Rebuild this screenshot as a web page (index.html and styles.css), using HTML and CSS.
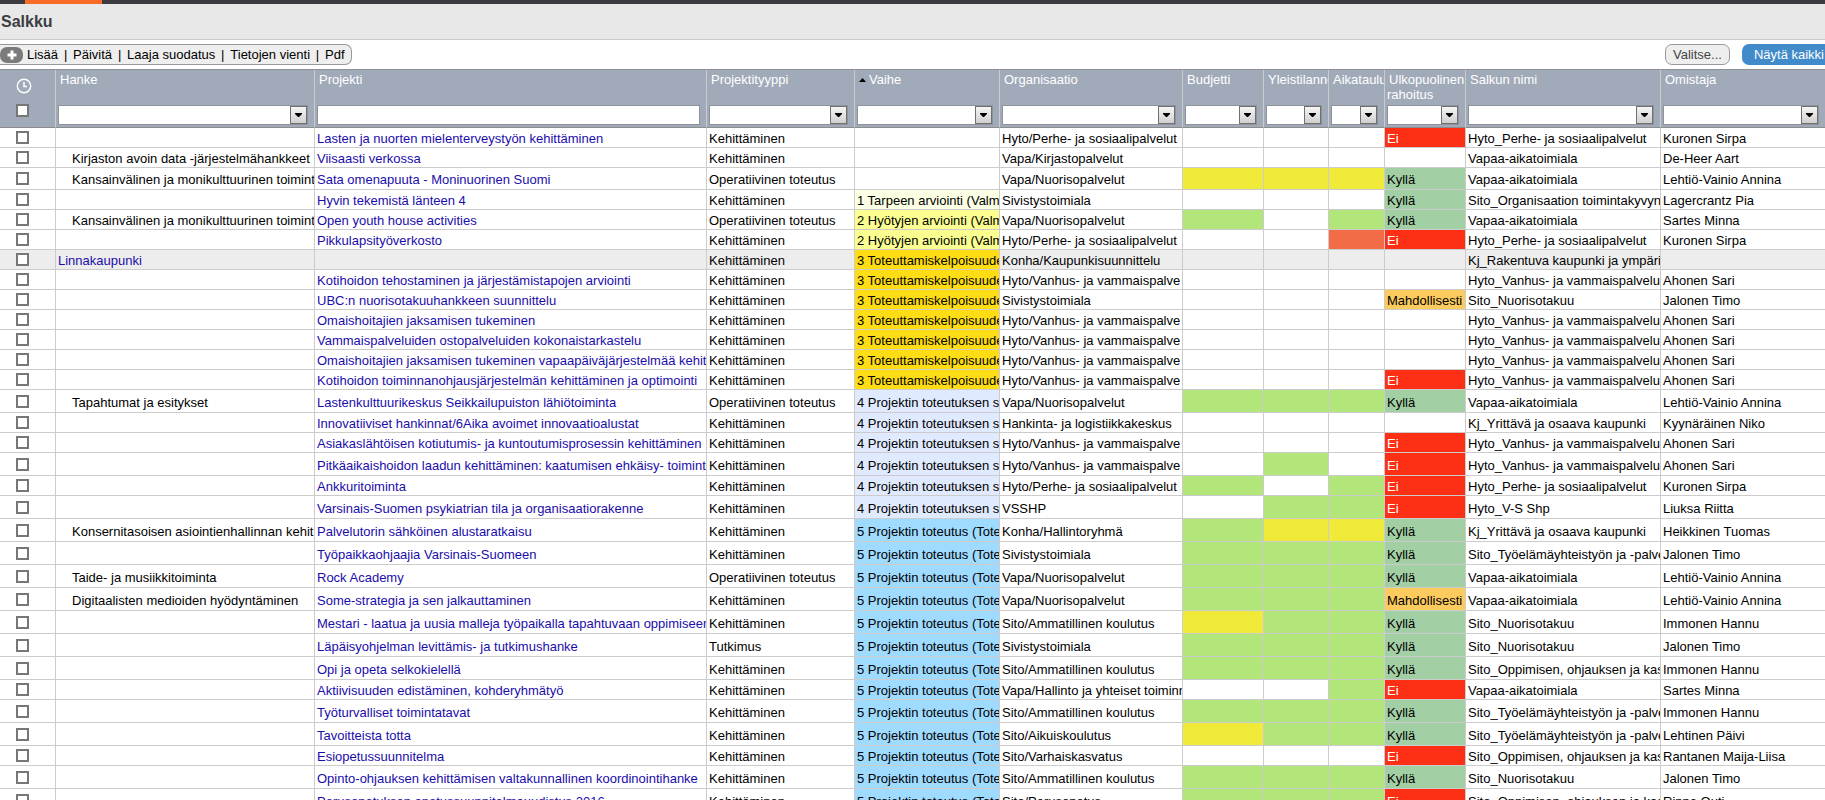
FILE: index.html
```html
<!DOCTYPE html>
<html lang="fi">
<head>
<meta charset="utf-8">
<title>Salkku</title>
<link rel="stylesheet" href="styles.css">
</head>
<body class="page">
<nav class="topbar"><span class="topbar-active"></span></nav>
<header class="titlebar"><h1 class="title">Salkku</h1></header>
<div class="toolbar">
  <div class="actions">
    <span class="plus"><svg width="10" height="10" viewBox="0 0 10 10" aria-hidden="true"><path d="M5 0.500v9M0.500 5h9" stroke="#fff" stroke-width="3"/></svg></span>
    <button class="action" type="button">Lisää</button><span class="bar">|</span>
    <button class="action" type="button">Päivitä</button><span class="bar">|</span>
    <button class="action" type="button">Laaja suodatus</button><span class="bar">|</span>
    <button class="action" type="button">Tietojen vienti</button><span class="bar">|</span>
    <button class="action" type="button">Pdf</button>
  </div>
  <div class="views">
    <button class="choose" type="button">Valitse...</button>
    <button class="show-all" type="button">Näytä kaikki</button>
  </div>
</div>
<main class="grid-area">
<table class="grid">
  <colgroup>
    <col class="c-check"><col class="c-hanke"><col class="c-projekti"><col class="c-tyyppi"><col class="c-vaihe"><col class="c-org"><col class="c-medium"><col class="c-yleis"><col class="c-aika"><col class="c-medium"><col class="c-salkku"><col>
  </colgroup>
  <thead>
    <tr>
      <th><div class="head head-check">
        <svg width="16" height="16" viewBox="0 0 16 16" aria-hidden="true"><circle cx="8" cy="8" r="6.7" fill="none" stroke="#fff" stroke-width="1.4"/><path d="M8 4v4.6h3" fill="none" stroke="#fff" stroke-width="1.5"/></svg>
        <input class="check" type="checkbox" aria-label="Valitse kaikki">
      </div></th>
      <th><div class="head"><label class="name" for="f1">Hanke</label><select class="filter" id="f1"><option></option></select></div></th>
      <th><div class="head"><label class="name" for="f2">Projekti</label><input class="filter filter-text" id="f2" type="text"></div></th>
      <th><div class="head"><label class="name" for="f3">Projektityyppi</label><select class="filter" id="f3"><option></option></select></div></th>
      <th><div class="head"><label class="name" for="f4"><svg class="sort" width="7" height="4" viewBox="0 0 7 4" aria-hidden="true"><path d="M0 4L3.500 0L7 4z"/></svg>Vaihe</label><select class="filter" id="f4"><option></option></select></div></th>
      <th><div class="head"><label class="name" for="f5">Organisaatio</label><select class="filter" id="f5"><option></option></select></div></th>
      <th><div class="head"><label class="name" for="f6">Budjetti</label><select class="filter" id="f6"><option></option></select></div></th>
      <th><div class="head"><label class="name" for="f7">Yleistilanne</label><select class="filter" id="f7"><option></option></select></div></th>
      <th><div class="head"><label class="name" for="f8">Aikataulu</label><select class="filter" id="f8"><option></option></select></div></th>
      <th><div class="head"><label class="name" for="f9">Ulkopuolinen<br>rahoitus</label><select class="filter" id="f9"><option></option></select></div></th>
      <th><div class="head"><label class="name" for="f10">Salkun nimi</label><select class="filter" id="f10"><option></option></select></div></th>
      <th><div class="head"><label class="name" for="f11">Omistaja</label><select class="filter" id="f11"><option></option></select></div></th>
    </tr>
  </thead>
  <tbody id="rows"></tbody>
</table>
</main>
<script src="app.js"></script>
</body>
</html>
```
FILE: styles.css
```css
.page {
  margin: 0;
  height: 100vh;
  display: flex;
  flex-direction: column;
  overflow: hidden;
  background: #fff;
  color: #000;
  font: 13px/15px "Liberation Sans", Arial, sans-serif;
}
.topbar {
  flex: none;
  height: 4px;
  padding-left: 25px;
  background: #3c3b41;
}
.topbar-active {
  display: block;
  width: 77px;
  height: 4px;
  background: #f96a26;
}
.titlebar {
  flex: none;
  padding: 9px 1px 8px;
  background: #e8e8e8;
  border-bottom: 1px solid #ccc;
}
.title {
  margin: 0;
  font-size: 16px;
  line-height: 18px;
  color: #3c3d42;
}
.toolbar {
  flex: none;
  display: flex;
  justify-content: space-between;
  padding: 4px 0;
}
.actions {
  display: flex;
  align-items: center;
  height: 19px;
  padding-right: 6px;
  background: #eee;
  border: 1px solid #999;
  border-left: 0;
  border-radius: 0 7px 7px 0;
}
.plus {
  display: flex;
  align-items: center;
  justify-content: center;
  width: 23px;
  height: 16px;
  margin-right: 4px;
  background: #7b7b7b;
  border-radius: 7px;
}
.action {
  padding: 0;
  border: 0;
  background: none;
  color: #000;
  font: inherit;
}
.bar {
  width: 15px;
  text-align: center;
}
.views {
  display: flex;
  gap: 12px;
}
.choose,
.show-all {
  height: 21px;
  padding: 0 7px;
  border: 1px solid #999;
  border-radius: 7px;
  background: #eee;
  color: #444;
  font: inherit;
}
.show-all {
  padding: 0 1px 0 12px;
  border: 0;
  border-radius: 7px 0 0 7px;
  background: #428bca;
  color: #fff;
}
.grid-area {
  flex: 1;
  min-height: 0;
  overflow: hidden;
}
.grid {
  width: 100%;
  table-layout: fixed;
  border-collapse: separate;
  border-spacing: 0;
  border-top: 1px solid #8d9196;
}
.c-check { width: 56px; }
.c-hanke { width: 259px; }
.c-projekti { width: 392px; }
.c-tyyppi { width: 148px; }
.c-vaihe { width: 145px; }
.c-org { width: 183px; }
.c-medium { width: 81px; }
.c-yleis { width: 65px; }
.c-aika { width: 56px; }
.c-salkku { width: 195px; }

th {
  padding: 0;
  background: #a1aab9;
  border-right: 1px solid #ccc;
  border-bottom: 1px solid #8d8d8d;
  color: #fff;
  font-weight: normal;
  text-align: left;
}
th:last-child,
td:last-child { border-right: 0; }
.head {
  display: flex;
  flex-direction: column;
  justify-content: space-between;
  height: 53px;
  padding: 2px 6px 2px 2px;
  overflow: hidden;
}
.head-check {
  height: 39px;
  padding: 8px 0 10px 16px;
}
.name {
  display: block;
  margin-right: -6px;
  text-indent: 2px;
  white-space: nowrap;
  overflow: hidden;
}
.sort {
  margin: 0 3px 2px 0;
  vertical-align: middle;
}
.filter {
  appearance: none;
  box-sizing: border-box;
  width: 100%;
  height: 20px;
  margin: 0;
  padding: 0 20px 0 2px;
  border: 1px solid #8e9299;
  border-radius: 0;
  background: #fff url("data:image/svg+xml,%3Csvg xmlns='http://www.w3.org/2000/svg' width='17' height='18'%3E%3ClinearGradient id='g' x2='0' y2='1'%3E%3Cstop stop-color='%23f6f6f6'/%3E%3Cstop offset='1' stop-color='%23cfcfcf'/%3E%3C/linearGradient%3E%3Crect x='.5' y='.5' width='16' height='17' fill='url(%23g)' stroke='%23707070'/%3E%3Cpath d='M5 7h7v1l-3 3h-1l-3-3z'/%3E%3C/svg%3E") no-repeat right center;
  color: #000;
  font: inherit;
}
.filter-text { background: #fff; }
.check {
  appearance: none;
  display: block;
  box-sizing: border-box;
  width: 13px;
  height: 13px;
  margin: 0;
  border: 2px solid #777;
  background: #fff;
}

td {
  height: 17px;
  padding: 2px 0 0 2px;
  border-right: 1px solid #ccc;
  border-bottom: 1px solid #ccc;
  vertical-align: middle;
  white-space: nowrap;
  overflow: hidden;
}
.mid td { height: 19px; }
.tall td { height: 20px; }
.grid .check-cell { padding: 0 0 0 16px; }
.group td { background: #ededed; }
.child { padding-left: 16px; }
.link {
  color: #1a0dab;
  text-decoration: none;
}
.grid .stage1 { background: #fbffe4; }
.grid .stage2 { background: #fbff90; }
.grid .stage3 { background: #ffdd15; }
.grid .stage4 { background: #e0eaff; }
.grid .stage5 { background: #9fdaff; }
.green { background: #b2e57a; }
.yellow { background: #f0ea38; }
.orange { background: #f26c47; }
.ei { background: #fd3016; color: #fff; }
.kylla { background: #a3cfa4; }
.mahdollisesti { background: #fbcb5e; }
```
FILE: app.js
```
const stages = [
  '',
  '1 Tarpeen arviointi (Valm',
  '2 Hyötyjen arviointi (Valm',
  '3 Toteuttamiskelpoisuude',
  '4 Projektin toteutuksen s',
  '5 Projektin toteutus (Tote'
];
const lights = { g: 'green', y: 'yellow', o: 'orange' };
const funding = { E: ['ei', 'Ei'], K: ['kylla', 'Kyllä'], M: ['mahdollisesti', 'Mahdollisesti'] };
const K = 'Kehittäminen', O = 'Operatiivinen toteutus';
const VV = 'Hyto/Vanhus- ja vammaispalve', VS = 'Hyto_Vanhus- ja vammaispalvelu';
const PP = 'Hyto/Perhe- ja sosiaalipalvelut', PS = 'Hyto_Perhe- ja sosiaalipalvelut';
const VN = 'Vapa/Nuorisopalvelut', VA = 'Vapaa-aikatoimiala', SN = 'Sito_Nuorisotakuu';
const SA = 'Sito/Ammatillinen koulutus', ST = 'Sito_Työelämäyhteistyön ja -palve', SO = 'Sito_Oppimisen, ohjauksen ja kas';

// size, hanke, projekti, type, stage, organisation, status lights, funding, portfolio, owner
const rows = [
  ['', '', 'Lasten ja nuorten mielenterveystyön kehittäminen', K, 0, PP, '---', 'E', PS, 'Kuronen Sirpa'],
  ['', 'Kirjaston avoin data -järjestelmähankkeet', 'Viisaasti verkossa', K, 0, 'Vapa/Kirjastopalvelut', '---', '', VA, 'De-Heer Aart'],
  ['mid', 'Kansainvälinen ja monikulttuurinen toimint', 'Sata omenapuuta - Moninuorinen Suomi', O, 0, VN, 'yyy', 'K', VA, 'Lehtiö-Vainio Annina'],
  ['', '', 'Hyvin tekemistä länteen 4', K, 1, 'Sivistystoimiala', '---', 'K', 'Sito_Organisaation toimintakyvyn', 'Lagercrantz Pia'],
  ['', 'Kansainvälinen ja monikulttuurinen toimint', 'Open youth house activities', O, 2, VN, 'g-g', 'K', VA, 'Sartes Minna'],
  ['', '', 'Pikkulapsityöverkosto', K, 2, PP, '--o', 'E', PS, 'Kuronen Sirpa'],
  ['group', 'Linnakaupunki', '', K, 3, 'Konha/Kaupunkisuunnittelu', '---', '', 'Kj_Rakentuva kaupunki ja ympäri', ''],
  ['', '', 'Kotihoidon tehostaminen ja järjestämistapojen arviointi', K, 3, VV, '---', '', VS, 'Ahonen Sari'],
  ['', '', 'UBC:n nuorisotakuuhankkeen suunnittelu', K, 3, 'Sivistystoimiala', '---', 'M', SN, 'Jalonen Timo'],
  ['', '', 'Omaishoitajien jaksamisen tukeminen', K, 3, VV, '---', '', VS, 'Ahonen Sari'],
  ['', '', 'Vammaispalveluiden ostopalveluiden kokonaistarkastelu', K, 3, VV, '---', '', VS, 'Ahonen Sari'],
  ['', '', 'Omaishoitajien jaksamisen tukeminen vapaapäiväjärjestelmää kehit', K, 3, VV, '---', '', VS, 'Ahonen Sari'],
  ['', '', 'Kotihoidon toiminnanohjausjärjestelmän kehittäminen ja optimointi', K, 3, VV, '---', 'E', VS, 'Ahonen Sari'],
  ['tall', 'Tapahtumat ja esitykset', 'Lastenkulttuurikeskus Seikkailupuiston lähiötoiminta', O, 4, VN, 'ggg', 'K', VA, 'Lehtiö-Vainio Annina'],
  ['', '', 'Innovatiiviset hankinnat/6Aika avoimet innovaatioalustat', K, 4, 'Hankinta- ja logistiikkakeskus', '---', '', 'Kj_Yrittävä ja osaava kaupunki', 'Kyynäräinen Niko'],
  ['', '', 'Asiakaslähtöisen kotiutumis- ja kuntoutumisprosessin kehittäminen', K, 4, VV, '---', 'E', VS, 'Ahonen Sari'],
  ['tall', '', 'Pitkäaikaishoidon laadun kehittäminen: kaatumisen ehkäisy- toimint', K, 4, VV, '-g-', 'E', VS, 'Ahonen Sari'],
  ['', '', 'Ankkuritoiminta', K, 4, PP, 'g-g', 'E', PS, 'Kuronen Sirpa'],
  ['tall', '', 'Varsinais-Suomen psykiatrian tila ja organisaatiorakenne', K, 4, 'VSSHP', '-gg', 'E', 'Hyto_V-S Shp', 'Liuksa Riitta'],
  ['tall', 'Konsernitasoisen asiointienhallinnan kehit', 'Palvelutorin sähköinen alustaratkaisu', K, 5, 'Konha/Hallintoryhmä', 'gyy', 'K', 'Kj_Yrittävä ja osaava kaupunki', 'Heikkinen Tuomas'],
  ['tall', '', 'Työpaikkaohjaajia Varsinais-Suomeen', K, 5, 'Sivistystoimiala', 'ggg', 'K', ST, 'Jalonen Timo'],
  ['tall', 'Taide- ja musiikkitoiminta', 'Rock Academy', O, 5, VN, 'ggg', 'K', VA, 'Lehtiö-Vainio Annina'],
  ['tall', 'Digitaalisten medioiden hyödyntäminen', 'Some-strategia ja sen jalkauttaminen', K, 5, VN, 'ggg', 'M', VA, 'Lehtiö-Vainio Annina'],
  ['tall', '', 'Mestari - laatua ja uusia malleja työpaikalla tapahtuvaan oppimiseen', K, 5, SA, 'ygg', 'K', SN, 'Immonen Hannu'],
  ['tall', '', 'Läpäisyohjelman levittämis- ja tutkimushanke', 'Tutkimus', 5, 'Sivistystoimiala', 'ggg', 'K', SN, 'Jalonen Timo'],
  ['tall', '', 'Opi ja opeta selkokielellä', K, 5, SA, 'ggg', 'K', SO, 'Immonen Hannu'],
  ['', '', 'Aktiivisuuden edistäminen, kohderyhmätyö', K, 5, 'Vapa/Hallinto ja yhteiset toiminn', '--g', 'E', VA, 'Sartes Minna'],
  ['tall', '', 'Työturvalliset toimintatavat', K, 5, SA, 'ggg', 'K', ST, 'Immonen Hannu'],
  ['tall', '', 'Tavoitteista totta', K, 5, 'Sito/Aikuiskoulutus', 'ygg', 'K', ST, 'Lehtinen Päivi'],
  ['', '', 'Esiopetussuunnitelma', K, 5, 'Sito/Varhaiskasvatus', '---', 'E', SO, 'Rantanen Maija-Liisa'],
  ['tall', '', 'Opinto-ohjauksen kehittämisen valtakunnallinen koordinointihanke', K, 5, SA, 'ggg', 'K', SN, 'Jalonen Timo'],
  ['tall', '', 'Perusopetuksen opetussuunnitelmauudistus 2016', K, 5, 'Sito/Perusopetus', 'ggg', 'E', SO, 'Rinne Outi']
];

const cell = (text, cls) => `<td${cls ? ` class="${cls}"` : ''}>${text}</td>`;
const link = text => text ? `<a class="link" href="#">${text}</a>` : '';

document.getElementById('rows').innerHTML = rows.map(
  ([size, hanke, projekti, type, stage, org, light, fund, portfolio, owner]) => {
    const [fundClass, fundText] = funding[fund] || ['', ''];
    return `<tr class="${size}">` +
      cell(`<input class="check" type="checkbox" aria-label="Valitse ${projekti || hanke}">`, 'check-cell') +
      (size === 'group' ? cell(link(hanke)) : cell(hanke, 'child')) +
      cell(link(projekti)) +
      cell(type) +
      cell(stages[stage], stage ? 'stage' + stage : '') +
      cell(org) +
      [...light].map(l => cell('', lights[l])).join('') +
      cell(fundText, fundClass) +
      cell(portfolio) +
      cell(owner) +
      '</tr>';
  }
).join('');
```
